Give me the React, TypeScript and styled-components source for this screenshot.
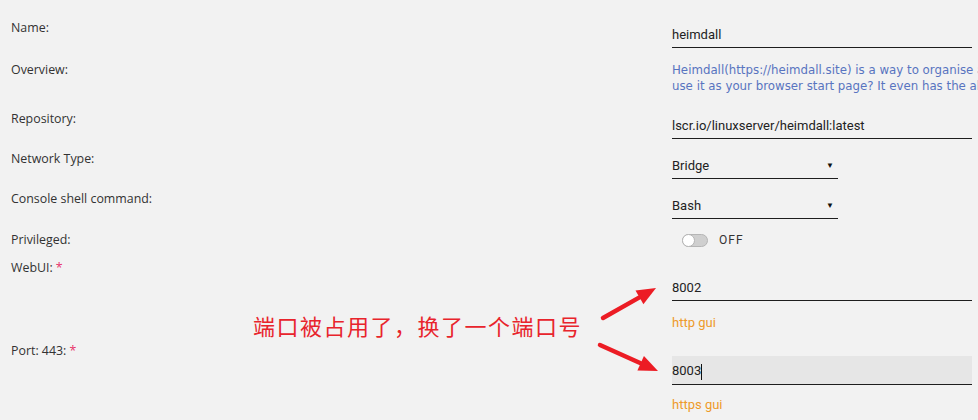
import React from 'react';
import styled, { createGlobalStyle } from 'styled-components';

const GlobalStyle = createGlobalStyle`
	html, body {
		margin: 0;
		padding: 0;
		background: #f2f2f2;
	}
	body {
		font-family: "Open Sans", "Liberation Sans", Arial, sans-serif;
		color: #333333;
	}
`;

const Page = styled.div`
	position: relative;
	width: 978px;
	height: 420px;
	overflow: hidden;
	background: #f2f2f2;
`;

const Form = styled.div`
	display: flex;
	flex-direction: column;
	padding: 18px 0 0 11px;
`;

const Row = styled.div<{ $height?: number }>`
	display: grid;
	grid-template-columns: 661px 300px;
	min-height: ${p => (p.$height ? `${p.$height}px` : 'auto')};
`;

const Label = styled.div`
	font-size: 12.4px;
	line-height: 20px;
	color: #333333;
`;

const Required = styled.span`
	color: #e8336a;
	margin-left: 3px;
`;

const Field = styled.div<{ $top?: number }>`
	display: flex;
	flex-direction: column;
	padding-top: ${p => p.$top ?? 0}px;
`;

const Input = styled.div<{ $width?: number; $focused?: boolean; $height?: number }>`
	display: flex;
	align-items: center;
	justify-content: space-between;
	box-sizing: border-box;
	width: ${p => (p.$width ? `${p.$width}px` : '100%')};
	height: ${p => p.$height ?? 30}px;
	padding: 3px 2px 0 0;
	border-bottom: 1px solid #1e1e1e;
	background: ${p => (p.$focused ? '#e6e6e6' : 'transparent')};
	font-family: Roboto, "Liberation Sans", Arial, sans-serif;
	font-size: 13px;
	color: #222222;
`;

const Caret = styled.span`
	display: inline-block;
	width: 1px;
	height: 16px;
	background: #111;
	vertical-align: middle;
`;

const SelectArrow = styled.span`
	font-size: 8px;
	color: #111;
	margin-right: 2px;
`;

const Overview = styled.div`
	font-family: "DejaVu Sans", Verdana, sans-serif;
	font-size: 11.8px;
	line-height: 16px;
	color: #5874c0;
	white-space: nowrap;
	padding-top: 2px;
`;

const ToggleRow = styled.div`
	display: flex;
	align-items: center;
	gap: 11px;
	padding: 2px 0 0 10px;
	height: 16px;
`;

const Track = styled.div`
	position: relative;
	box-sizing: border-box;
	width: 26px;
	height: 13px;
	border-radius: 7px;
	background: #cfcfcf;
	border: 1px solid #b5b5b5;
`;

const Knob = styled.div`
	position: absolute;
	left: -1px;
	top: -1px;
	width: 13px;
	height: 13px;
	border-radius: 50%;
	background: #ffffff;
	border: 1px solid #b5b5b5;
	box-sizing: border-box;
`;

const ToggleText = styled.span`
	font-family: Roboto, "Liberation Sans", Arial, sans-serif;
	font-size: 12px;
	letter-spacing: 1px;
	color: #333;
`;

const Help = styled.div<{ $top?: number }>`
	font-family: Roboto, "Liberation Sans", Arial, sans-serif;
	font-size: 13px;
	line-height: 20px;
	color: #ee9a2a;
	padding-top: ${p => p.$top ?? 12}px;
`;

const Note = styled.div`
	position: absolute;
	left: 253px;
	top: 311px;
	font-family: "Noto Sans CJK SC", "Noto Sans", sans-serif;
	font-size: 22px;
	line-height: 28px;
	letter-spacing: 1.5px;
	color: #e8242c;
`;

const Arrows = styled.svg`
	position: absolute;
	left: 590px;
	top: 280px;
`;

const Arrow = ({ x1, y1, x2, y2 }: { x1: number; y1: number; x2: number; y2: number }) => {
	const a = Math.atan2(y2 - y1, x2 - x1);
	const len = 19;
	const w = 8;
	const bx = x2 - Math.cos(a) * len;
	const by = y2 - Math.sin(a) * len;
	const px = -Math.sin(a) * w;
	const py = Math.cos(a) * w;
	return (
		<g fill="#ec1c24" stroke="#ec1c24">
			<line x1={x1} y1={y1} x2={bx} y2={by} strokeWidth={4.5} strokeLinecap="round" />
			<polygon points={`${x2},${y2} ${bx + px},${by + py} ${bx - px},${by - py}`} stroke="none" />
		</g>
	);
};

export default function App() {
	return (
		<Page>
			<GlobalStyle />
			<Form>
				<Row $height={42}>
					<Label>Name:</Label>
					<Field>
						<Input>heimdall</Input>
					</Field>
				</Row>
				<Row $height={49}>
					<Label>Overview:</Label>
					<Overview>
						Heimdall(https://heimdall.site) is a way to organise all those links to your most used web sites and web applications in a simple way.
						<br />
						use it as your browser start page? It even has the ability to include a search bar using either Google, Bing or DuckDuckGo.
					</Overview>
				</Row>
				<Row $height={40}>
					<Label>Repository:</Label>
					<Field>
						<Input>lscr.io/linuxserver/heimdall:latest</Input>
					</Field>
				</Row>
				<Row $height={40}>
					<Label>Network Type:</Label>
					<Field>
						<Input $width={166}>
							Bridge
							<SelectArrow>▼</SelectArrow>
						</Input>
					</Field>
				</Row>
				<Row $height={41}>
					<Label>Console shell command:</Label>
					<Field>
						<Input $width={166}>
							Bash
							<SelectArrow>▼</SelectArrow>
						</Input>
					</Field>
				</Row>
				<Row $height={28}>
					<Label>Privileged:</Label>
					<ToggleRow>
						<Track>
							<Knob />
						</Track>
						<ToggleText>OFF</ToggleText>
					</ToggleRow>
				</Row>
				<Row $height={83}>
					<Label>
						WebUI:<Required>*</Required>
					</Label>
					<Field $top={13}>
						<Input>8002</Input>
						<Help>http gui</Help>
					</Field>
				</Row>
				<Row>
					<Label>
						Port: 443:<Required>*</Required>
					</Label>
					<Field $top={15}>
						<Input $focused $height={29}>
							<span>
								8003
								<Caret />
							</span>
						</Input>
						<Help $top={10}>https gui</Help>
					</Field>
				</Row>
			</Form>
			<Note>端口被占用了，换了一个端口号</Note>
			<Arrows width={80} height={100} viewBox="590 280 80 100">
				<Arrow x1={603} y1={318} x2={656} y2={288} />
				<Arrow x1={600} y1={345} x2={658} y2={371} />
			</Arrows>
		</Page>
	);
}
